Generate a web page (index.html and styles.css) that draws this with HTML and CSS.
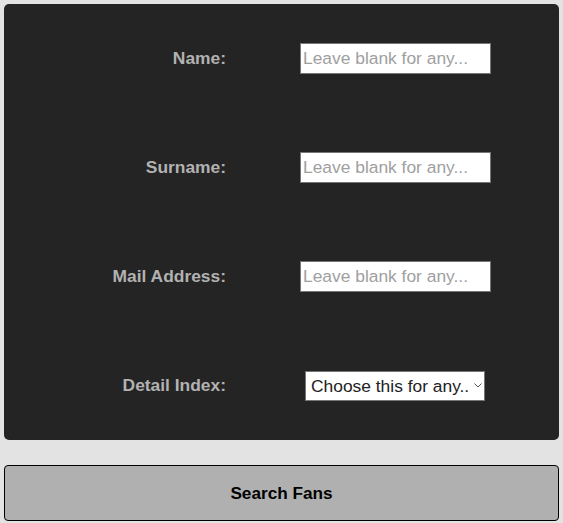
FILE: index.html
```html
<!DOCTYPE html>
<html>
<head>
<meta charset="utf-8">
<link rel="stylesheet" href="styles.css">
</head>
<body>
<form class="search">
  <div class="panel">
    <div class="row">
      <label class="label" for="name">Name:</label>
      <div class="field"><input id="name" class="text" type="text" placeholder="Leave blank for any..."></div>
    </div>
    <div class="row">
      <label class="label" for="surname">Surname:</label>
      <div class="field"><input id="surname" class="text" type="text" placeholder="Leave blank for any..."></div>
    </div>
    <div class="row">
      <label class="label" for="mail">Mail Address:</label>
      <div class="field"><input id="mail" class="text" type="text" placeholder="Leave blank for any..."></div>
    </div>
    <div class="row">
      <label class="label" for="detail">Detail Index:</label>
      <div class="field">
        <div class="select-wrap">
          <select id="detail" class="choice">
            <option>Choose this for any..</option>
          </select>
          <svg class="chevron" width="8" height="5" viewBox="0 0 8 5"><path d="M0.5 0.5 L4 4 L7.5 0.5" fill="none" stroke="#555" stroke-width="1"/></svg>
        </div>
      </div>
    </div>
  </div>
  <button type="button" class="submit">Search Fans</button>
</form>
</body>
</html>
```

FILE: styles.css
```css
html, body {
  margin: 0;
  padding: 0;
  background: #e3e3e3;
}
body {
  padding: 4px;
  font-family: "Liberation Sans", Arial, sans-serif;
}
.search {
  display: flex;
  flex-direction: column;
  gap: 25px;
}
.panel {
  background: #242424;
  border-radius: 5px;
  display: flex;
  flex-direction: column;
}
.row {
  height: 109px;
  display: grid;
  grid-template-columns: 222px 1fr;
  column-gap: 6px;
  align-items: center;
}
.label {
  text-align: right;
  font-weight: bold;
  font-size: 17.4px;
  color: #b2b2b2;
}
.field {
  display: flex;
  justify-content: center;
}
.text {
  box-sizing: border-box;
  width: 191px;
  height: 31px;
  margin: 0 0 1px 0;
  padding: 1px 2px;
  border: 1px solid #767676;
  border-radius: 0;
  background: #fff;
  font-family: "Liberation Sans", Arial, sans-serif;
  font-size: 17.4px;
  color: #000;
}
.text::placeholder {
  color: #a0a0a0;
}
.select-wrap {
  position: relative;
  display: flex;
  margin-right: 1px;
}
.choice {
  appearance: none;
  -webkit-appearance: none;
  box-sizing: border-box;
  width: 180px;
  height: 30px;
  margin: 0;
  padding: 0 12px 0 5px;
  border: 1px solid #767676;
  border-radius: 0;
  background: #fff;
  font-family: "Liberation Sans", Arial, sans-serif;
  font-size: 17.4px;
  color: #222;
}
.chevron {
  position: absolute;
  right: 3px;
  top: 12px;
  pointer-events: none;
}
.submit {
  box-sizing: border-box;
  height: 56px;
  width: 100%;
  background: #b0b0b0;
  border: 1px solid #000;
  border-radius: 4px;
  font-family: "Liberation Sans", Arial, sans-serif;
  font-weight: bold;
  font-size: 17.2px;
  color: #000;
}
```
